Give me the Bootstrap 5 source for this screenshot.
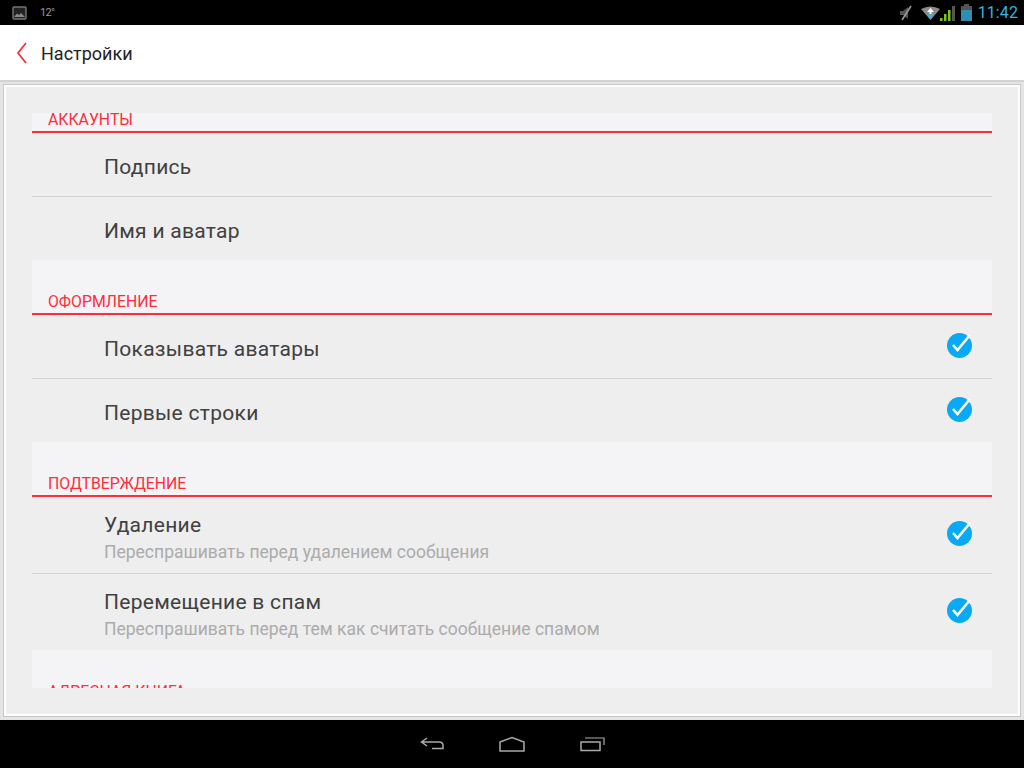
<!DOCTYPE html>
<html lang="ru">
<head>
    <meta charset="UTF-8">
    <meta name="viewport" content="width=device-width, initial-scale=1.0">
    <title>Настройки</title>
    <link rel="stylesheet" href="https://cdn.jsdelivr.net/npm/bootstrap@5.3.0/dist/css/bootstrap.min.css">
    <script src="https://cdn.jsdelivr.net/npm/bootstrap@5.3.0/dist/js/bootstrap.bundle.min.js"></script>
    <style>
        html, body {
            height: 100%;
            margin: 0;
            overflow: hidden;
        }
        body {
            font-family: Roboto, "Liberation Sans", sans-serif;
            background: #e4e4e4;
        }
        .app-screen {
            width: 1024px;
            height: 768px;
        }
        .status-bar {
            height: 25px;
            background: #000;
            padding: 0 6px 0 12px;
        }
        .temp-label {
            font-size: 11px;
            color: #999;
            margin-left: 13px;
            margin-top: 2px;
            letter-spacing: -.7px;
        }
        .clock-label {
            font-size: 16px;
            color: #33b5e5;
            margin-left: 6px;
            letter-spacing: .1px;
        }
        .batt-icon {
            margin-left: 6px;
        }
        .action-bar {
            height: 57px;
            background: #fff;
            padding-left: 16px;
            padding-top: 1px;
            border-bottom: 2px solid #d4d4d4;
        }
        .action-title {
            font-size: 18px;
            color: #222;
            margin-left: 13px;
        }
        .page-area {
            height: 638px;
            padding: 2px 3px 3px;
            background: #e4e4e4;
        }
        .settings-panel {
            height: 100%;
            border: 1px solid #c8c8c8;
            background: #eee;
            box-shadow: inset 0 0 0 2px #fff;
            padding: 28px 28px 28px;
        }
        .settings-scroll {
            height: 100%;
            overflow: hidden;
        }
        .settings-inner {
            margin-top: -35px;
        }
        .group-head {
            height: 55px;
            background: #f4f4f6;
            border-bottom: 2px solid #ff2d3a;
            padding-left: 16px;
            font-size: 15.8px;
            line-height: 16px;
            padding-top: 34px;
            color: #ff2d3a;
        }
        .set-row {
            padding-left: 72px;
            padding-right: 19px;
            height: 63px;
            color: #404040;
        }
        .set-row.tall-row {
            height: 76px;
        }
        .row-line {
            height: 1px;
            background: #d2d2d2;
        }
        .row-title {
            font-size: 21px;
            line-height: 24px;
            letter-spacing: .28px;
            padding-top: 4px;
        }
        .tall-text {
            padding-top: 4px;
        }
        .tall-text .row-title {
            padding-top: 0;
        }
        .row-sub {
            font-size: 17.5px;
            line-height: 20px;
            color: #ababab;
            margin-top: 5px;
        }
        .check-mark {
            margin-top: -4px;
        }
        .nav-strip {
            height: 48px;
            background: #000;
            gap: 55px;
        }
    </style>
</head>
<body>
<div class="app-screen d-flex flex-column">

    <!-- status bar -->
    <div class="status-bar d-flex align-items-center">
        <svg width="15" height="14" viewBox="0 0 15 14">
            <rect x="1" y="1" width="13" height="12" rx="1" fill="#222" stroke="#777" stroke-width="1.4"/>
            <path d="M2 11 L5 7.500 L7 9 L9 7 L13 11Z" fill="#888"/>
        </svg>
        <span class="temp-label">12°</span>
        <div class="ms-auto d-flex align-items-center">
            <svg width="14" height="16" viewBox="0 0 14 16" class="me-2">
                <path d="M1 6H4L9 2V14L4 10H1Z" fill="#555"/>
                <path d="M12 1L3 15" stroke="#999" stroke-width="1.600"/>
            </svg>
            <svg width="19" height="14" viewBox="0 0 19 14">
                <path d="M0 3 Q9.500 -2 19 3 L9.500 14Z" fill="#8a8a8a"/>
                <path d="M9.500 2 L13 6H6Z" fill="#fff"/>
                <rect x="8.500" y="5.500" width="2" height="2.500" fill="#fff"/>
                <path d="M6 8.500H13L9.500 13Z" fill="#33b5e5"/>
            </svg>
            <svg width="15" height="16" viewBox="0 0 15 16">
                <path d="M0 13H2.500V16H0Z M4 9H6.500V16H4Z M8 5H10.500V16H8Z" fill="#7fc31c"/>
                <path d="M12 1H15V16H12Z" fill="#555"/>
            </svg>
            <svg width="11" height="17" viewBox="0 0 11 17" class="batt-icon">
                <rect x="3" y="0" width="5" height="2" fill="#555"/>
                <rect x="0" y="2" width="11" height="4" fill="#555"/>
                <rect x="0" y="6" width="11" height="11" fill="#2f8fb0"/>
            </svg>
            <span class="clock-label">11:42</span>
        </div>
    </div>

    <!-- action bar -->
    <div class="action-bar d-flex align-items-center">
        <svg width="12" height="24" viewBox="0 0 12 24">
            <path d="M10 2 L2 12 L10 22" fill="none" stroke="#ff2d3a" stroke-width="1.800"/>
        </svg>
        <span class="action-title">Настройки</span>
    </div>

    <!-- content -->
    <div class="page-area flex-grow-1">
        <div class="settings-panel">
            <div class="settings-scroll">
                <div class="settings-inner">
                    <div class="group-head">АККАУНТЫ</div>
                    <div class="set-row d-flex align-items-center"><div class="row-title">Подпись</div></div>
                    <div class="row-line"></div>
                    <div class="set-row d-flex align-items-center"><div class="row-title">Имя и аватар</div></div>

                    <div class="group-head">ОФОРМЛЕНИЕ</div>
                    <div class="set-row d-flex align-items-center">
                        <div class="row-title">Показывать аватары</div>
                        <svg class="check-mark ms-auto" width="27" height="26" viewBox="0 0 27 26"><use href="#tick"/></svg>
                    </div>
                    <div class="row-line"></div>
                    <div class="set-row d-flex align-items-center">
                        <div class="row-title">Первые строки</div>
                        <svg class="check-mark ms-auto" width="27" height="26" viewBox="0 0 27 26"><use href="#tick"/></svg>
                    </div>

                    <div class="group-head">ПОДТВЕРЖДЕНИЕ</div>
                    <div class="set-row tall-row d-flex align-items-center">
                        <div class="tall-text">
                            <div class="row-title">Удаление</div>
                            <div class="row-sub">Переспрашивать перед удалением сообщения</div>
                        </div>
                        <svg class="check-mark ms-auto" width="27" height="26" viewBox="0 0 27 26"><use href="#tick"/></svg>
                    </div>
                    <div class="row-line"></div>
                    <div class="set-row tall-row d-flex align-items-center">
                        <div class="tall-text">
                            <div class="row-title">Перемещение в спам</div>
                            <div class="row-sub">Переспрашивать перед тем как считать сообщение спамом</div>
                        </div>
                        <svg class="check-mark ms-auto" width="27" height="26" viewBox="0 0 27 26"><use href="#tick"/></svg>
                    </div>

                    <div class="group-head">АДРЕСНАЯ КНИГА</div>
                </div>
            </div>
        </div>
    </div>

    <!-- nav bar -->
    <div class="nav-strip d-flex align-items-center justify-content-center">
        <svg width="24" height="16" viewBox="0 0 24 16">
            <path d="M7 2 L1.500 6 L7 10 M2 6 H19 Q23 6 23 9.500 V12.500 H12" fill="none" stroke="#aaa" stroke-width="1.500"/>
        </svg>
        <svg width="26" height="16" viewBox="0 0 26 16">
            <path d="M1 6 L13 1.500 L25 6 V15 H1Z" fill="none" stroke="#aaa" stroke-width="1.500"/>
        </svg>
        <svg width="25" height="16" viewBox="0 0 25 16">
            <rect x="1" y="6" width="19" height="8.500" fill="none" stroke="#aaa" stroke-width="1.500"/>
            <path d="M5 2 H24 V9" fill="none" stroke="#aaa" stroke-width="1.200"/>
        </svg>
    </div>
</div>

<svg width="0" height="0" class="d-block">
    <symbol id="tick" viewBox="0 0 27 26">
        <circle cx="13.500" cy="13.500" r="12.500" fill="#0aa9f5"/>
        <path d="M7 13 L11.500 18 L24 3" fill="none" stroke="#fff" stroke-width="2.600"/>
    </symbol>
</svg>
</body>
</html>
